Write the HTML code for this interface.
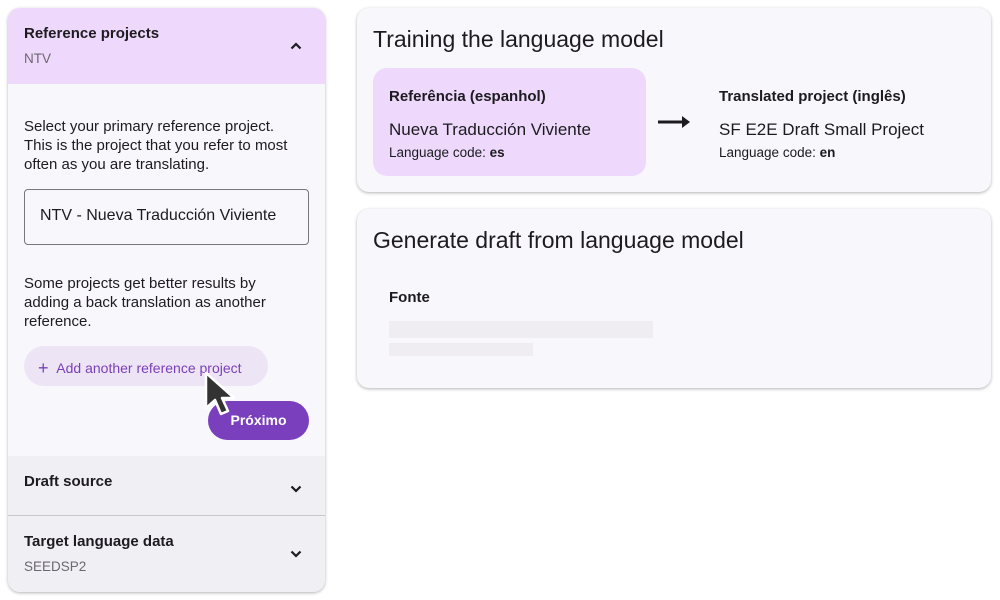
<!DOCTYPE html>
<html><head><style>
*{box-sizing:border-box;margin:0;padding:0}
body{width:1000px;height:600px;background:#fff;font-family:"Liberation Sans",sans-serif;color:#1b1b1f;position:relative;overflow:hidden}
.a{position:absolute}
.panel{left:8px;top:8px;width:317px;height:584px;border-radius:12px;background:#f8f7fc;box-shadow:0 1px 3px rgba(0,0,0,.3);overflow:hidden}
.t{font-size:15px;font-weight:bold;color:#1d1b20}
.s{font-size:13.5px;color:#6b6870}
.p{font-size:15px;line-height:19px;color:#1d1b20;white-space:nowrap}
.card{left:357px;width:634px;border-radius:12px;background:#f8f7fc;box-shadow:0 1px 3px rgba(0,0,0,.3)}
.h{font-size:23px;color:#1d1b20}
</style></head><body>
<div class="a panel">
  <div class="a" style="left:0;top:0;width:317px;height:76px;background:#eed9fc"></div>
  <div class="a t" style="left:16px;top:17px">Reference projects</div>
  <div class="a s" style="left:16px;top:43px">NTV</div>
  <svg class="a" style="left:282px;top:33px" width="12" height="10" viewBox="0 0 12 10"><path d="M1.5 7.5 L6 3 L10.5 7.5" stroke="#1d1b20" stroke-width="2.2" fill="none"/></svg>
  <div class="a p" style="left:16px;top:109px">Select your primary reference project.<br>This is the project that you refer to most<br>often as you are translating.</div>
  <div class="a" style="left:16px;top:181px;width:285px;height:56px;border:1px solid #79767e;border-radius:4px;font-size:16px;padding:17px 0 0 15px;color:#1d1b20">NTV - Nueva Traducción Viviente</div>
  <div class="a p" style="left:16px;top:266px">Some projects get better results by<br>adding a back translation as another<br>reference.</div>
  <div class="a" style="left:16px;top:338px;width:244px;height:40px;border-radius:20px;background:#ede5f6;color:#7a3fb8;font-size:14px;padding:11px 0 0 14px;white-space:nowrap"><span style="font-size:18px;position:relative;top:1px">+</span>&nbsp;&nbsp;Add another reference project</div>
  <div class="a" style="left:200px;top:393px;width:101px;height:39px;border-radius:20px;background:#7a3fbc;color:#fff;font-size:14px;font-weight:bold;text-align:center;padding-top:11px">Próximo</div>
  <div class="a" style="left:0;top:448px;width:317px;height:136px;background:#f0eff4"></div>
  <div class="a" style="left:0;top:507px;width:317px;height:1px;background:#c9c6cc"></div>
  <div class="a t" style="left:16px;top:465px">Draft source</div>
  <svg class="a" style="left:282px;top:476px" width="12" height="10" viewBox="0 0 12 10"><path d="M1.5 2.5 L6 7 L10.5 2.5" stroke="#1d1b20" stroke-width="2.2" fill="none"/></svg>
  <div class="a t" style="left:16px;top:525px">Target language data</div>
  <div class="a s" style="left:16px;top:551px">SEEDSP2</div>
  <svg class="a" style="left:282px;top:541px" width="12" height="10" viewBox="0 0 12 10"><path d="M1.5 2.5 L6 7 L10.5 2.5" stroke="#1d1b20" stroke-width="2.2" fill="none"/></svg>
</div>
<svg class="a" style="left:202px;top:370px" width="42" height="50" viewBox="0 0 42 50"><path d="M4 3 L4 38 L13 30 L19 44 L26 41 L20 28 L32 28 Z" fill="#333" stroke="#fff" stroke-width="2.5" stroke-linejoin="round"/></svg>

<div class="a card" style="top:8px;height:184px">
  <div class="a h" style="left:16px;top:18px">Training the language model</div>
  <div class="a" style="left:16px;top:60px;width:273px;height:108px;border-radius:14px;background:#eed9fc"></div>
  <div class="a t" style="left:32px;top:80px">Referência (espanhol)</div>
  <div class="a" style="left:32px;top:112px;font-size:17px">Nueva Traducción Viviente</div>
  <div class="a" style="left:32px;top:137px;font-size:13.5px">Language code: <b>es</b></div>
  <svg class="a" style="left:301px;top:107px" width="32" height="14" viewBox="0 0 32 14"><path d="M0 7 H27" stroke="#1d1b20" stroke-width="3"/><path d="M24 1 L32 7 L24 13 Z" fill="#1d1b20"/></svg>
  <div class="a t" style="left:362px;top:80px">Translated project (inglês)</div>
  <div class="a" style="left:362px;top:112px;font-size:17px">SF E2E Draft Small Project</div>
  <div class="a" style="left:362px;top:137px;font-size:13.5px">Language code: <b>en</b></div>
</div>
<div class="a card" style="top:209px;height:179px">
  <div class="a h" style="left:16px;top:18px">Generate draft from language model</div>
  <div class="a t" style="left:32px;top:80px">Fonte</div>
  <div class="a" style="left:32px;top:112px;width:264px;height:17px;background:#efedf2"></div>
  <div class="a" style="left:32px;top:134px;width:144px;height:13px;background:#efedf2"></div>
</div>
</body></html>
